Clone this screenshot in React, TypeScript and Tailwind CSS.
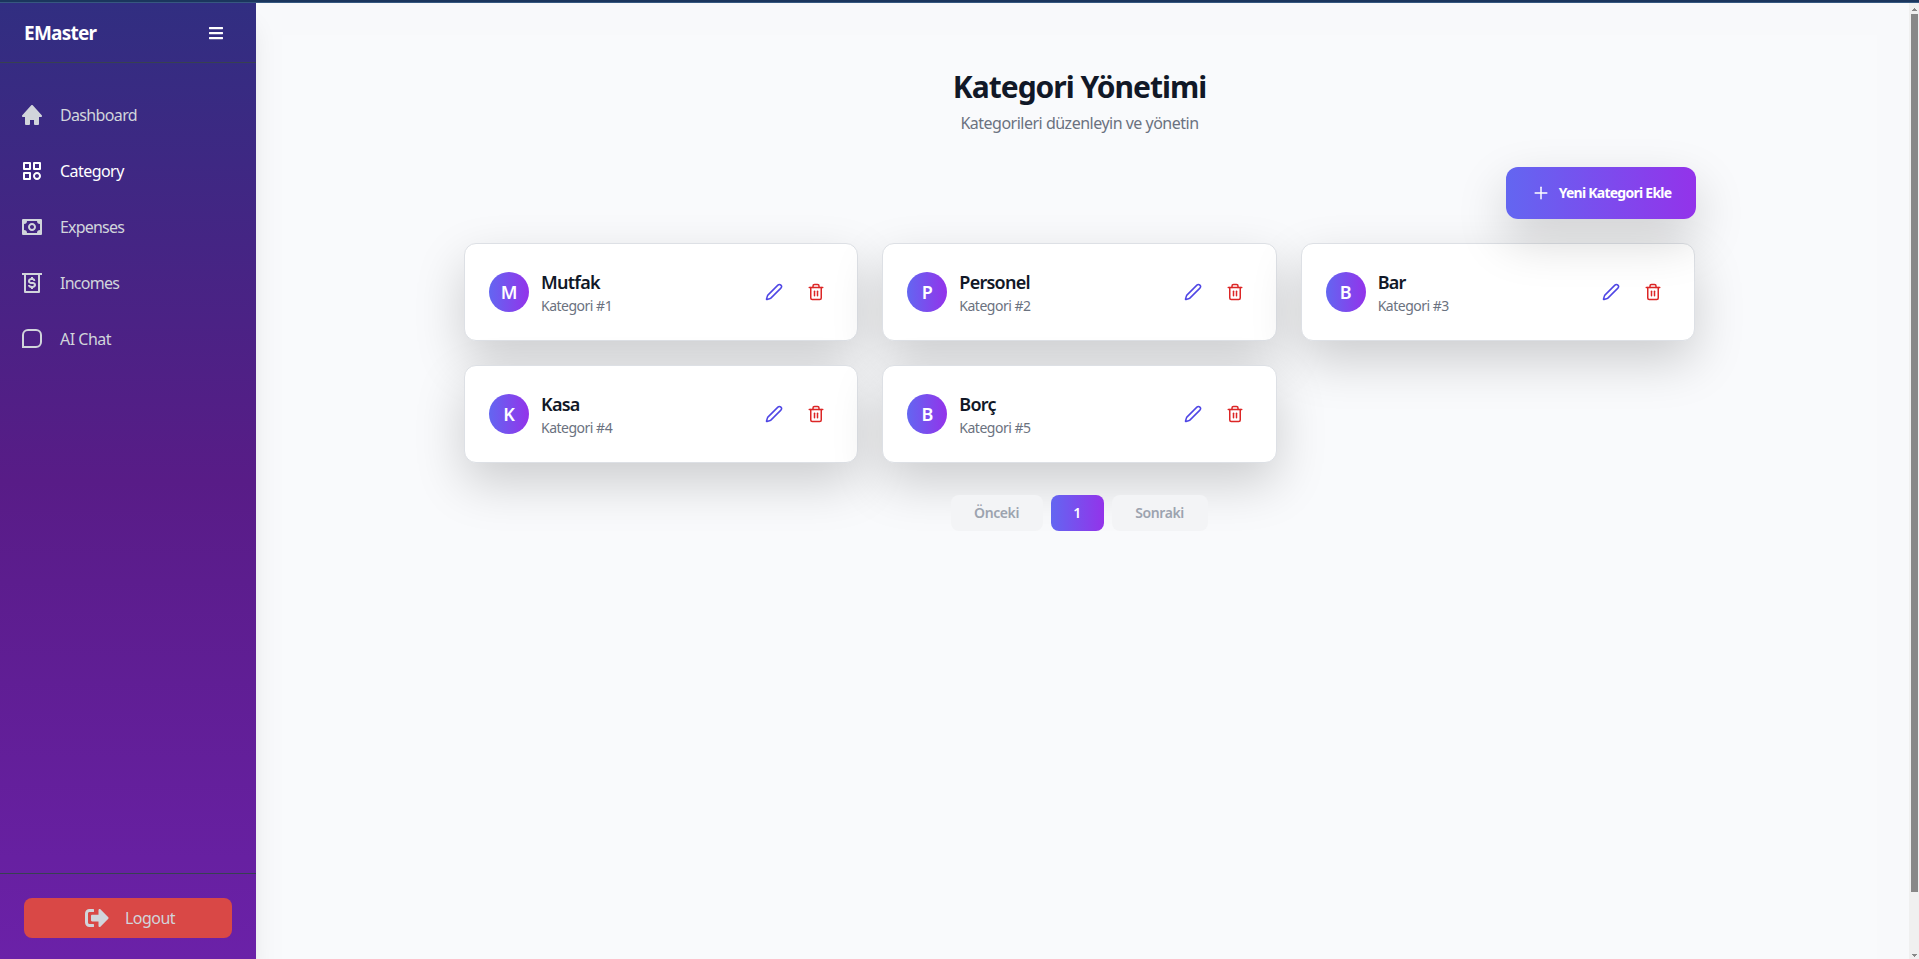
import type { ReactNode } from "react";
import { Pen, Plus, Trash2 } from "lucide-react";
import { BiCategory, BiMoney, BiMoneyWithdraw, BiSolidHome } from "react-icons/bi";
import { FaBars, FaSignOutAlt } from "react-icons/fa";

const font = "font-['Segoe_UI','Noto_Sans',sans-serif]";
const accent = "bg-linear-to-r/srgb from-[#6366f1] to-[#9333ea]";

function ChatIcon() {
  return (
    <svg width="24" height="24" viewBox="0 0 24 24" fill="none" stroke="currentColor" strokeWidth="2">
      <path d="M3 20V8a5 5 0 0 1 5-5h8a5 5 0 0 1 5 5v7a5 5 0 0 1-5 5z" />
    </svg>
  );
}

const nav: { label: string; icon: ReactNode; active?: boolean; spacing: string }[] = [
  { label: "Dashboard", icon: <BiSolidHome size={24} />, spacing: "tracking-[-0.65px]" },
  { label: "Category", icon: <BiCategory size={24} />, active: true, spacing: "tracking-[-0.55px]" },
  { label: "Expenses", icon: <BiMoney size={24} />, spacing: "tracking-[-0.8px]" },
  { label: "Incomes", icon: <BiMoneyWithdraw size={24} />, spacing: "tracking-[-0.75px]" },
  { label: "AI Chat", icon: <ChatIcon />, spacing: "tracking-[-0.5px]" },
];

const categories = ["Mutfak", "Personel", "Bar", "Kasa", "Borç"];

function Sidebar() {
  return (
    <aside className="z-20 flex w-64 shrink-0 flex-col bg-linear-to-b/srgb from-[#312e81] via-[#581c87] to-[#6b21a8] text-[#d1d5db] shadow-[0_20px_25px_-5px_rgba(0,0,0,0.1),0_8px_10px_-6px_rgba(0,0,0,0.1)]">
      <div className="flex h-15 items-center justify-between border-b border-[#374151] pr-8 pl-6 text-white">
        <span className="pt-0.5 text-[19px] font-bold tracking-[-0.75px]">EMaster</span>
        <FaBars size={16} />
      </div>
      <nav className="flex flex-1 flex-col gap-2 pt-7">
        {nav.map((n) => (
          <a key={n.label} className={`flex h-12 items-center gap-4 pl-5 ${n.active ? "text-white" : ""}`}>
            {n.icon}
            <span className={`text-base ${n.spacing}`}>{n.label}</span>
          </a>
        ))}
      </nav>
      <div className="h-[86px] border-t border-[#374151] px-6 pt-6">
        <button className="flex h-10 w-full items-center justify-center gap-4 rounded-lg bg-[#d94846] pl-1">
          <FaSignOutAlt size={24} />
          <span className="text-base tracking-[-0.5px]">Logout</span>
        </button>
      </div>
    </aside>
  );
}

function CategoryCard({ name, index }: { name: string; index: number }) {
  return (
    <div className="flex h-[98px] items-center rounded-xl border border-[#dde0e5] bg-white px-6 shadow-[0_20px_50px_rgba(0,0,0,0.18)]">
      <div className={`flex size-10 items-center justify-center rounded-full text-lg font-semibold text-white ${accent}`}>
        {name[0]}
      </div>
      <div className="ml-3 flex-1">
        <h3 className="text-lg leading-7 font-semibold tracking-[-0.75px] text-[#111827]">{name}</h3>
        <p className="text-sm leading-5 tracking-[-0.5px] text-[#6b7280]">Kategori #{index}</p>
      </div>
      <div className="flex gap-2">
        <button className="p-2 text-[#4f46e5]"><Pen size={18} /></button>
        <button className="p-2 text-[#dc2626]"><Trash2 size={18} /></button>
      </div>
    </div>
  );
}

function Scrollbar() {
  return (
    <div className="flex w-2.5 shrink-0 flex-col items-center bg-[#f0f0f0] pl-px">
      <svg width="7" height="11" viewBox="0 0 7 11" fill="#888"><path d="M3 5h1v1h1v1h1v1H1V7h1V6h1z" /></svg>
      <div className="h-[878px] w-[7px] bg-[#888]" />
      <div className="flex-1" />
      <svg width="7" height="8" viewBox="0 0 7 8" fill="#888"><path d="M1 3h5v1H5v1H4v1H3V5H2V4H1z" /></svg>
    </div>
  );
}

export default function App() {
  return (
    <div className={`flex h-[959px] w-full flex-col overflow-hidden ${font}`}>
      <div className="h-[3px] shrink-0 border-b border-[#365880] bg-[#1b365d]" />
      <div className="flex min-h-0 flex-1">
        <Sidebar />
        <main className="flex-1 bg-[#f8f9fb] pt-8 pr-8 pl-[26px]">
          <div className="h-full bg-[#f9fafc] pt-8">
            <div className="mx-auto w-[1231px]">
              <header className="text-center">
                <h1 className="pt-0.5 text-3xl leading-9 font-bold tracking-[-1px] text-[#111827]">Kategori Yönetimi</h1>
                <p className="mt-1.5 text-base leading-6 tracking-[-0.5px] text-[#6b7280]">Kategorileri düzenleyin ve yönetin</p>
              </header>
              <div className="mt-8 -mr-px flex justify-end">
                <button className={`z-10 flex h-[52px] w-[190px] items-center justify-center gap-2 rounded-xl text-sm font-bold tracking-[-0.75px] whitespace-nowrap text-white shadow-[0_20px_50px_rgba(0,0,0,0.18)] ${accent}`}>
                  <Plus size={20} strokeWidth={1.8} />
                  Yeni Kategori Ekle
                </button>
              </div>
              <div className="mt-6 grid grid-cols-3 gap-6">
                {categories.map((c, i) => (
                  <CategoryCard key={c} name={c} index={i + 1} />
                ))}
              </div>
              <div className="relative mt-8 flex justify-center gap-2 pr-px text-sm font-semibold tracking-[-0.4px] text-[#9ca3af]">
                <button className="h-9 w-[92px] rounded-lg bg-[#f3f4f6]">Önceki</button>
                <button className={`h-9 w-[53px] rounded-lg text-white ${accent}`}>1</button>
                <button className="h-9 w-24 rounded-lg bg-[#f3f4f6]">Sonraki</button>
              </div>
            </div>
          </div>
        </main>
        <Scrollbar />
      </div>
    </div>
  );
}
